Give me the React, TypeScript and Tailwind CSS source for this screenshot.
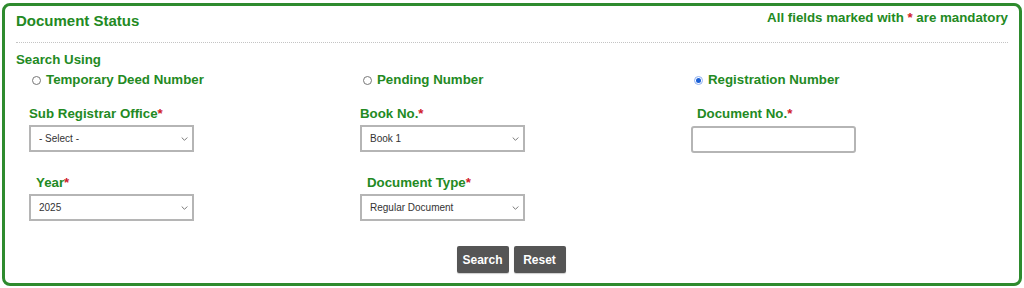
import React from "react";

const Star = () => <span className="text-[#d0202a]">*</span>;

function Chevron() {
  return (
    <svg
      className="pointer-events-none absolute right-[6px] top-1/2 -translate-y-1/2"
      width="7"
      height="5"
      viewBox="0 0 7 5"
      fill="none"
    >
      <path d="M0.7 1 L3.5 3.8 L6.3 1" stroke="#777" strokeWidth="1" />
    </svg>
  );
}

function Select({ value }: { value: string }) {
  return (
    <div className="relative w-[165px] h-[27px]">
      <select
        defaultValue={value}
        className="appearance-none w-full h-full border-2 border-[#b5b5b5] bg-white pl-[8px] text-[10px] font-normal text-[#333] font-['Liberation_Sans',Arial,sans-serif] outline-none"
      >
        <option>{value}</option>
      </select>
      <Chevron />
    </div>
  );
}

function Radio({ label, checked }: { label: string; checked?: boolean }) {
  return (
    <label className="flex items-center h-[16px]">
      {checked ? (
        <span className="w-[9px] h-[9px] rounded-full border border-[#8fb0f0] bg-white flex items-center justify-center ml-[3px]">
          <span className="w-[5px] h-[5px] rounded-full bg-[#1a5fd6]" />
        </span>
      ) : (
        <span className="w-[9px] h-[9px] rounded-full border border-[#777] bg-white ml-[3px]" />
      )}
      <span className="ml-[5px] text-[13.3px] font-bold">{label}</span>
    </label>
  );
}

export default function App() {
  return (
    <div className="pt-[3px] pl-[2px] bg-white">
      <div className="w-[1020px] h-[283px] border-[3px] border-[#2e8b2e] rounded-[8px] px-[11px] font-['Liberation_Sans',Arial,sans-serif] text-[#238a23] bg-white">
        <div className="flex justify-between h-[28px]">
          <div className="text-[15px] font-bold leading-[18px] mt-[6px]">Document Status</div>
          <div className="text-[13.3px] font-bold leading-[16px] mt-[4px]">
            All fields marked with <Star /> are mandatory
          </div>
        </div>
        <div className="mt-[8px] border-t border-dotted border-[#c4c4c4]" />
        <div className="mt-[9px] text-[13.3px] font-bold leading-[16px]">Search Using</div>
        <div className="mt-[4px] ml-[13px] grid grid-cols-[331px_331px_1fr]">
          <Radio label="Temporary Deed Number" />
          <Radio label="Pending Number" />
          <Radio label="Registration Number" checked />
        </div>
        <div className="mt-[18px] ml-[13px] grid grid-cols-[331px_331px_1fr] text-[13.3px] font-bold leading-[16px]">
          <div>
            <div>Sub Registrar Office<Star /></div>
            <div className="mt-[3px]">
              <Select value="- Select -" />
            </div>
          </div>
          <div>
            <div>Book No.<Star /></div>
            <div className="mt-[3px]">
              <Select value="Book 1" />
            </div>
          </div>
          <div>
            <div className="pl-[6px]">Document No.<Star /></div>
            <div className="mt-[4px]">
              <input className="w-[165px] h-[27px] border-2 border-[#b5b5b5] rounded-[3px] bg-white outline-none" />
            </div>
          </div>
        </div>
        <div className="mt-[22px] ml-[13px] grid grid-cols-[331px_331px_1fr] text-[13.3px] font-bold leading-[16px]">
          <div>
            <div className="pl-[7px]">Year<Star /></div>
            <div className="mt-[3px]">
              <Select value="2025" />
            </div>
          </div>
          <div>
            <div className="pl-[7px]">Document Type<Star /></div>
            <div className="mt-[3px]">
              <Select value="Regular Document" />
            </div>
          </div>
          <div />
        </div>
        <div className="mt-[25px] flex justify-center gap-[5px] pr-[2px]">
          <button className="w-[52px] h-[27px] bg-[#555] rounded-[2px] text-white text-[12px] font-bold shadow-[0_1px_1px_rgba(0,0,0,0.2)]">
            Search
          </button>
          <button className="w-[52px] h-[27px] bg-[#555] rounded-[2px] text-white text-[12px] font-bold shadow-[0_1px_1px_rgba(0,0,0,0.2)]">
            Reset
          </button>
        </div>
      </div>
    </div>
  );
}
